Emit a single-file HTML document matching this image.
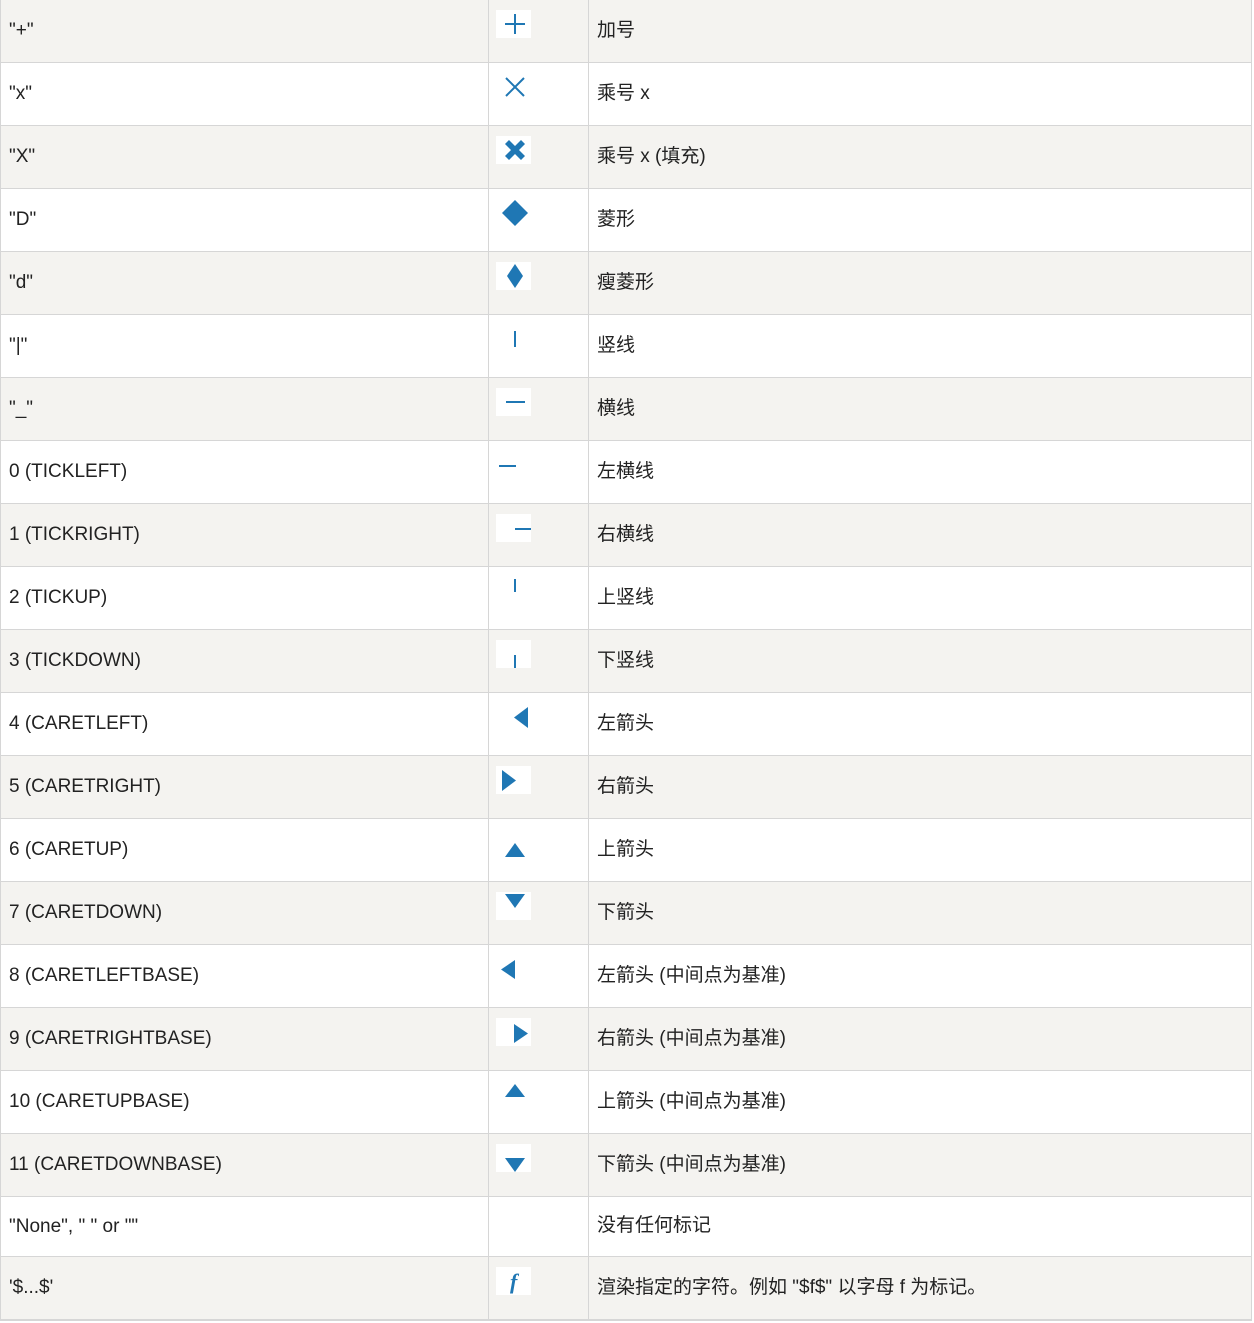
<!DOCTYPE html>
<html><head><meta charset="utf-8"><style>
*{margin:0;padding:0;box-sizing:border-box}
body{width:1254px;height:1323px;background:#fff;font-family:"Liberation Sans","Noto Sans CJK SC",sans-serif;font-size:19px;color:#222;position:relative;overflow:hidden}
.tbl{position:absolute;left:0;top:0;width:1252px;border-right:1px solid #d6d6d6;border-left:1px solid #d6d6d6;border-bottom:1px solid #d6d6d6}
.r{position:relative;height:63px;border-bottom:1px solid #d6d6d6}
.r.g{background:#f4f3f0}
.r.h60{height:60px}
.c1{position:absolute;left:8px;top:0;height:100%;display:flex;align-items:center}
.c3{position:absolute;left:596px;top:0;height:100%;display:flex;align-items:center;padding-bottom:6px}
.v1{position:absolute;left:487px;top:0;bottom:0;border-left:1px solid #d6d6d6}
.v2{position:absolute;left:587px;top:0;bottom:0;border-left:1px solid #d6d6d6}
svg{position:absolute;left:495px;top:10px;background:#fff}
</style></head><body><div class="tbl">
<div class="r g"><div class="c1">"+"</div><div class="v1"></div><div class="v2"></div><svg width="35" height="28"><path d="M19 4V24M9 14H29" stroke="#1f77b4" stroke-width="2"/></svg><div class="c3">加号</div></div>
<div class="r"><div class="c1">"x"</div><div class="v1"></div><div class="v2"></div><svg width="35" height="28"><path d="M10 5L28 23M28 5L10 23" stroke="#1f77b4" stroke-width="2"/></svg><div class="c3">乘号 x</div></div>
<div class="r g"><div class="c1">"X"</div><div class="v1"></div><div class="v2"></div><svg width="35" height="28"><path d="M13 4L19 10L25 4L29 8L23 14L29 20L25 24L19 18L13 24L9 20L15 14L9 8Z" fill="#1f77b4"/></svg><div class="c3">乘号 x (填充)</div></div>
<div class="r"><div class="c1">"D"</div><div class="v1"></div><div class="v2"></div><svg width="35" height="28"><path d="M19 1L32 14L19 27L6 14Z" fill="#1f77b4"/></svg><div class="c3">菱形</div></div>
<div class="r g"><div class="c1">"d"</div><div class="v1"></div><div class="v2"></div><svg width="35" height="28"><path d="M19 2L27 14L19 26L11 14Z" fill="#1f77b4"/></svg><div class="c3">瘦菱形</div></div>
<div class="r"><div class="c1">"|"</div><div class="v1"></div><div class="v2"></div><svg width="35" height="28"><path d="M19 6V22" stroke="#1f77b4" stroke-width="2"/></svg><div class="c3">竖线</div></div>
<div class="r g"><div class="c1">"_"</div><div class="v1"></div><div class="v2"></div><svg width="35" height="28"><path d="M10 14H29" stroke="#1f77b4" stroke-width="2"/></svg><div class="c3">横线</div></div>
<div class="r"><div class="c1">0 (TICKLEFT)</div><div class="v1"></div><div class="v2"></div><svg width="35" height="28"><path d="M3 15H20" stroke="#1f77b4" stroke-width="2"/></svg><div class="c3">左横线</div></div>
<div class="r g"><div class="c1">1 (TICKRIGHT)</div><div class="v1"></div><div class="v2"></div><svg width="35" height="28"><path d="M19 15H35" stroke="#1f77b4" stroke-width="2"/></svg><div class="c3">右横线</div></div>
<div class="r"><div class="c1">2 (TICKUP)</div><div class="v1"></div><div class="v2"></div><svg width="35" height="28"><path d="M19 2V15" stroke="#1f77b4" stroke-width="2"/></svg><div class="c3">上竖线</div></div>
<div class="r g"><div class="c1">3 (TICKDOWN)</div><div class="v1"></div><div class="v2"></div><svg width="35" height="28"><path d="M19 15V28" stroke="#1f77b4" stroke-width="2"/></svg><div class="c3">下竖线</div></div>
<div class="r"><div class="c1">4 (CARETLEFT)</div><div class="v1"></div><div class="v2"></div><svg width="35" height="28"><path d="M18 14.5L32 4V25Z" fill="#1f77b4"/></svg><div class="c3">左箭头</div></div>
<div class="r g"><div class="c1">5 (CARETRIGHT)</div><div class="v1"></div><div class="v2"></div><svg width="35" height="28"><path d="M6 4V25L20 14.5Z" fill="#1f77b4"/></svg><div class="c3">右箭头</div></div>
<div class="r"><div class="c1">6 (CARETUP)</div><div class="v1"></div><div class="v2"></div><svg width="35" height="28"><path d="M19 14L29 28H9Z" fill="#1f77b4"/></svg><div class="c3">上箭头</div></div>
<div class="r g"><div class="c1">7 (CARETDOWN)</div><div class="v1"></div><div class="v2"></div><svg width="35" height="28"><path d="M9 2H29L19 16Z" fill="#1f77b4"/></svg><div class="c3">下箭头</div></div>
<div class="r"><div class="c1">8 (CARETLEFTBASE)</div><div class="v1"></div><div class="v2"></div><svg width="35" height="28"><path d="M5 14.5L19 5V24Z" fill="#1f77b4"/></svg><div class="c3">左箭头 (中间点为基准)</div></div>
<div class="r g"><div class="c1">9 (CARETRIGHTBASE)</div><div class="v1"></div><div class="v2"></div><svg width="35" height="28"><path d="M18 6V25L32 15.5Z" fill="#1f77b4"/></svg><div class="c3">右箭头 (中间点为基准)</div></div>
<div class="r"><div class="c1">10 (CARETUPBASE)</div><div class="v1"></div><div class="v2"></div><svg width="35" height="28"><path d="M19 3L29 16H9Z" fill="#1f77b4"/></svg><div class="c3">上箭头 (中间点为基准)</div></div>
<div class="r g"><div class="c1">11 (CARETDOWNBASE)</div><div class="v1"></div><div class="v2"></div><svg width="35" height="28"><path d="M9 14H29L19 28Z" fill="#1f77b4"/></svg><div class="c3">下箭头 (中间点为基准)</div></div>
<div class="r h60"><div class="c1">"None", " " or ""</div><div class="v1"></div><div class="v2"></div><div class="c3">没有任何标记</div></div>
<div class="r g"><div class="c1">'$...$'</div><div class="v1"></div><div class="v2"></div><svg width="35" height="28"><text x="14" y="22" font-family="Liberation Serif,serif" font-style="italic" font-weight="bold" font-size="22" fill="#1f77b4">f</text></svg><div class="c3">渲染指定的字符。例如 "$f$" 以字母 f 为标记。</div></div>
</div></body></html>
